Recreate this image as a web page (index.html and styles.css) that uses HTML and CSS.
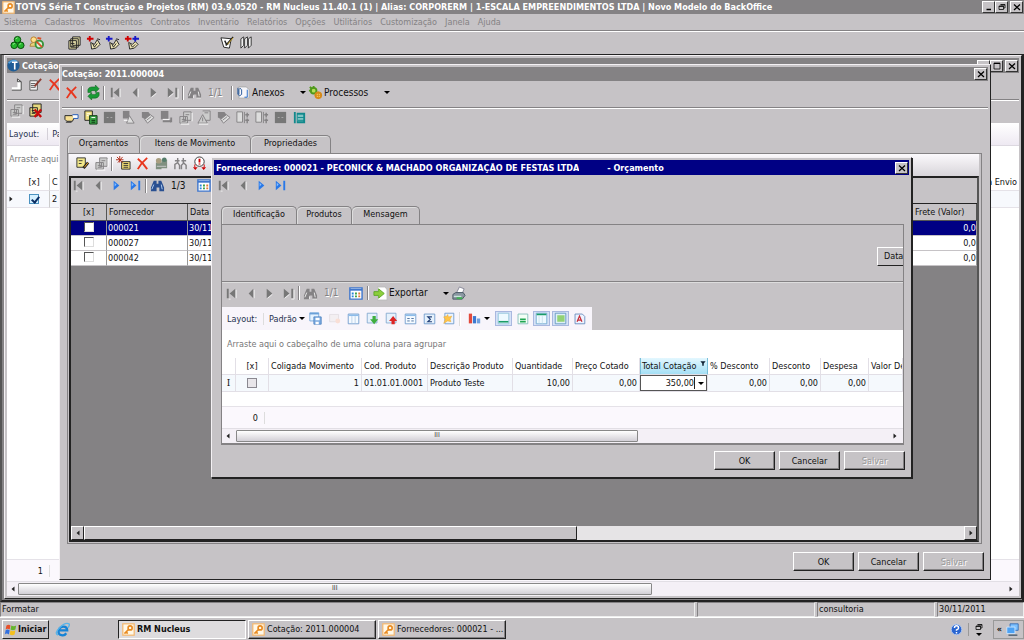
FILE: index.html
```html
<!DOCTYPE html>
<html lang="pt-BR">
<head>
<meta charset="utf-8">
<title>RM Nucleus</title>
<link rel="stylesheet" href="styles.css">
</head>
<body>
<svg class="defs" aria-hidden="true">
<symbol id="key" viewBox="0 0 16 16"><rect x="1" y="1" width="14" height="14" fill="#fff8e8" stroke="#f4b870" stroke-width="1.500"/><circle cx="10" cy="6" r="2.500" fill="none" stroke="#e88a20" stroke-width="2"/><path d="M8 8L3 13M5 11l2 2" stroke="#e88a20" stroke-width="2"/></symbol>
<symbol id="tri" viewBox="0 0 16 16"><g stroke="#044a08" fill="#25b52c"><circle cx="8" cy="5" r="3.500"/><circle cx="4.500" cy="11" r="3.500"/><circle cx="11.500" cy="11" r="3.500"/></g><path d="M6 4l2-1M3 10l2-1M10 10l2-1" stroke="#a9f5a4"/></symbol>
<symbol id="users" viewBox="0 0 16 16"><circle cx="5" cy="5" r="3" fill="#ffe08c" stroke="#b97d24"/><path d="M1 12q0-4 4-4t4 4z" fill="#e9d27b" stroke="#a98642"/><circle cx="11" cy="10" r="4" fill="#d8f0d8" stroke="#37943c" stroke-width="2"/><path d="M8 7l6 6M9 3l4 1" stroke="#d8512a" stroke-width="2"/></symbol>
<symbol id="stack" viewBox="0 0 16 16"><path d="M6 2h8v9h-8zM4 4h8v9H4zM2 6h8v9H2z" fill="#e6dfa8" stroke="#222"/><path d="M4 9h4M4 12h4" stroke="#222"/></symbol>
<symbol id="tagr" viewBox="0 0 16 16"><path d="M5 8l4 2 3-5 3 5-4 4-5 1z" fill="#f0e6b4" stroke="#222"/><path d="M7 9l2 4 3-4M12 4l3 1" stroke="#222" fill="none"/><path d="M1 4h7M4 1v6" stroke="#d00000" stroke-width="2"/></symbol>
<symbol id="tagb" viewBox="0 0 16 16"><path d="M5 8l4 2 3-5 3 5-4 4-5 1z" fill="#f0e6b4" stroke="#222"/><path d="M7 9l2 4 3-4M12 4l3 1" stroke="#222" fill="none"/><path d="M1 4h7M4 1v6" stroke="#1818c8" stroke-width="2"/></symbol>
<symbol id="tagrb" viewBox="0 0 16 16"><path d="M5 8l4 2 3-3 3 3-4 4-5 1z" fill="#f0e6b4" stroke="#222"/><path d="M7 10l2 3 3-3" stroke="#222" fill="none"/><path d="M1 4h7M4 1v6" stroke="#d00000" stroke-width="2"/><path d="M9 4h7M12 1v6" stroke="#1818c8" stroke-width="2"/></symbol>
<symbol id="note" viewBox="0 0 16 16"><path d="M1 3l11 1-2 10-6-1z" fill="#fff" stroke="#222"/><path d="M5 6l2 4 7-8M9 9l-3 2" stroke="#222" stroke-width="1.500" fill="none"/><path d="M8 10l6-7" stroke="#c9a020"/></symbol>
<symbol id="books" viewBox="0 0 16 16"><path d="M2 4l3-2v9l-3 3zM6 4l3-2v9l-3 3zM10 4l3-2v9l-3 3z" fill="#eee" stroke="#333"/></symbol>
<symbol id="totvs" viewBox="0 0 16 16"><circle cx="8" cy="8" r="7.500" fill="#1e5c96"/><path d="M2 5q5-5 10-2" stroke="#59a7df" stroke-width="2" fill="none"/><path d="M6 4h7M9.500 4v9" stroke="#fff" stroke-width="2"/></symbol>
<symbol id="page" viewBox="0 0 16 16"><path d="M3 14h10V5L9 2v9H3z" fill="#fff"/><path d="M3 14h10V5L9 2M9 2v3h4" stroke="#444" fill="none"/></symbol>
<symbol id="edit" viewBox="0 0 16 16"><path d="M2 4h8v10H2z" fill="#f4f4f4" stroke="#555"/><path d="M3 7h5M3 9h5M3 11h5" stroke="#555"/><path d="M7 10l7-8" stroke="#8c3c30" stroke-width="2"/></symbol>
<symbol id="x" viewBox="0 0 16 16"><path d="M3 3q5 4 10 11M13 2Q7 7 3 14" stroke="#e8361e" stroke-width="2" fill="none"/></symbol>
<symbol id="refresh" viewBox="0 0 16 16"><path d="M2 8V5q1-3 4-3h4V0l4 4-4 4V6H7q-2 0-2 2zM14 8v3q-1 3-4 3H6v2l-4-4 4-4v2h3q2 0 2-2z" fill="#179a35" stroke="#075a18" stroke-width=".5"/></symbol>
<symbol id="first" viewBox="0 0 16 16"><path d="M3 3h2v10H3zM12 3v10L6 8z" fill="#777"/><path d="M5 14h2M13 4v9" stroke="#eee"/></symbol>
<symbol id="prev" viewBox="0 0 16 16"><path d="M11 3v10L6 8z" fill="#777"/><path d="M12 4v9" stroke="#eee"/></symbol>
<symbol id="next" viewBox="0 0 16 16"><path d="M5 3v10l6-5z" fill="#777"/><path d="M6 13l5-4" stroke="#eee"/></symbol>
<symbol id="last" viewBox="0 0 16 16"><path d="M3 3v10l6-5zM11 3h2v10h-2z" fill="#777"/><path d="M14 4v10h-3M4 13l5-4" stroke="#eee" fill="none"/></symbol>
<symbol id="nextb" viewBox="0 0 16 16"><path d="M5 3v10l6-5z" fill="#2878e8"/><path d="M6 5v4l2-2z" fill="#8bc0ff"/></symbol>
<symbol id="lastb" viewBox="0 0 16 16"><path d="M3 3v10l6-5zM11 3h2v10h-2z" fill="#2878e8"/><path d="M4 5v4l2-2z" fill="#8bc0ff"/></symbol>
<symbol id="bino" viewBox="0 0 16 16"><path d="M4 3h3v3h2V3h3l3 7v4h-5v-4H7v4H1v-4z" fill="#848284"/><path d="M4 7l-2 5M12 7l1 5M7 11v3M15 14h-5" stroke="#eee"/></symbol>
<symbol id="binob" viewBox="0 0 16 16"><path d="M4 3h3v3h2V3h3l3 7v4h-5v-4H7v4H1v-4z" fill="#294f91"/><path d="M4 7l-2 5M12 7l1 5" stroke="#b6d2f4"/></symbol>
<symbol id="clip" viewBox="0 0 16 16"><path d="M3 2h8l3 3v9H3z" fill="#f6f6fa" stroke="#aaa"/><path d="M2 3v7q2 3 4 0V5Q4 2 3 5v5" stroke="#24569a" fill="none"/><path d="M12 5v8h-3" stroke="#1d65c6" fill="none"/></symbol>
<symbol id="proc" viewBox="0 0 16 16"><circle cx="6" cy="6" r="3" fill="#b3df58" stroke="#4f991b" stroke-width="2"/><path d="M1 6h3M6 1v3M2 2l2 2" stroke="#4f991b" stroke-width="2"/><circle cx="11" cy="11" r="3" fill="#ffd466" stroke="#d68a18" stroke-width="2"/><path d="M7 11h8M11 7v8" stroke="#d68a18"/></symbol>
<symbol id="hand" viewBox="0 0 16 16"><path d="M1 6h8l2 2-2 4H3l-2-2z" fill="#f7df92" stroke="#222"/><path d="M9 5h6v4h-5" fill="#fff" stroke="#1d57b5"/><path d="M2 13h6" stroke="#222"/></symbol>
<symbol id="calc" viewBox="0 0 16 16"><path d="M2 1h8v10H2z" fill="#f0e080" stroke="#222"/><path d="M7 6h8v9H7z" fill="#39a546" stroke="#163c1a"/><path d="M9 8h4M4 4h4M4 6h2" stroke="#fff"/><path d="M9 11h4M9 13h4" stroke="#0a280d"/></symbol>
<symbol id="gbox" viewBox="0 0 16 16"><path d="M2 2h12v12H2z" fill="#777"/><path d="M5 8h2M9 8h2" stroke="#aaa"/></symbol>
<symbol id="g1" viewBox="0 0 16 16"><path d="M2 1h7v8H2z" fill="#848284"/><path d="M9 6l5 8H6z" fill="#ddd" stroke="#848284"/><path d="M3 11h4" stroke="#fff"/></symbol>
<symbol id="g2" viewBox="0 0 16 16"><path d="M2 2h7l3 4-6 4-4-2z" fill="#848284"/><path d="M5 10l6-5 4 3-7 6z" fill="#ddd" stroke="#848284"/><path d="M7 11l5-4" stroke="#848284"/></symbol>
<symbol id="g3" viewBox="0 0 16 16"><path d="M2 1h8v9H2z" fill="#848284"/><path d="M4 12h9v-4M13 13l-2-2" stroke="#848284" stroke-width="2" fill="none"/><path d="M4 10h7" stroke="#fff"/></symbol>
<symbol id="g4" viewBox="0 0 16 16"><path d="M6 2h8v9H6zM2 7h8v7H2z" fill="#ccc" stroke="#848284"/><path d="M8 5h4M4 10h4M4 12h4M8 7v5" stroke="#848284"/><path d="M3 15h9M15 3v9" stroke="#fff"/></symbol>
<symbol id="g5" viewBox="0 0 16 16"><path d="M6 1h8v10H9M6 5l5 9H1z" fill="#ccc" stroke="#848284"/><path d="M6 8v4M8 3h4" stroke="#848284"/><path d="M2 15h10" stroke="#fff"/></symbol>
<symbol id="g6" viewBox="0 0 16 16"><path d="M2 2h6v11H2zM10 2v12" fill="#ddd" stroke="#848284"/><path d="M11 5h4M11 11h4M13 3v5M13 9v5" stroke="#848284" stroke-width="1.500"/></symbol>
<symbol id="teal" viewBox="0 0 16 16"><path d="M2 2h2v12H2zM5 3h9v11H5z" fill="#12898c"/><path d="M6 5h6v7H6z" fill="#7fc4c4"/><path d="M6 8h7M6 11h7" stroke="#12898c"/></symbol>
<symbol id="pedit" viewBox="0 0 16 16"><path d="M2 2h9v10H2z" fill="#f3e88a" stroke="#333"/><path d="M4 5h4M4 8h3" stroke="#333"/><path d="M9 13l5-6" stroke="#222" stroke-width="3"/><path d="M10 12l4-5" stroke="#ffad22"/></symbol>
<symbol id="addb" viewBox="0 0 16 16"><path d="M6 6h9v8H6z" fill="#f0dc74" stroke="#333"/><path d="M8 8h5M8 10h5M8 12h5" stroke="#333"/><path d="M1 1l6 6M7 1L2 7M4 0v7M0 4h8" stroke="#b12b18"/></symbol>
<symbol id="ppl" viewBox="0 0 16 16"><path d="M2 7h6v7H2zM8 4h6v9H8z" fill="#809080"/><circle cx="5" cy="5" r="3" fill="#a99e80"/><circle cx="11" cy="4" r="2.500" fill="#557d6b"/><path d="M3 11h10" stroke="#ccc"/></symbol>
<symbol id="run" viewBox="0 0 16 16"><path d="M5 2v5l-3 2v5M5 7l2 3v4M11 2v6l-2 2v4M11 7l3 3v4M2 5h5M9 5h5" stroke="#848284" stroke-width="1.500" fill="none"/></symbol>
<symbol id="warn" viewBox="0 0 16 16"><circle cx="8" cy="6" r="5" fill="#fff" stroke="#333"/><path d="M8 3v4M8 8v1" stroke="#d00000" stroke-width="2"/><path d="M1 12h5l-2.500 3zM10 12h5l-2.500 3z" fill="#d00000"/><path d="M3 9v3M13 9v3" stroke="#d00000"/></symbol>
<symbol id="delx" viewBox="0 0 16 16"><path d="M5 1h9v9H5zM2 5h8v9H2z" fill="#e6d97c" stroke="#222"/><path d="M4 8h4M4 11h4" stroke="#222"/><path d="M7 7l7 8M14 7l-7 8" stroke="#c80c0c" stroke-width="2.500"/></symbol>
<symbol id="cal" viewBox="0 0 16 16"><path d="M2 2h13v12H2z" fill="#fff" stroke="#3f76cc" stroke-width="1.500"/><path d="M2 4h13" stroke="#3f76cc" stroke-width="2"/><path d="M4 8h2M4 11h2" stroke="#2586d8" stroke-width="2"/><path d="M7.500 8h2M7.500 11h2" stroke="#37a045" stroke-width="2"/><path d="M11 8h2M11 11h2" stroke="#e47a35" stroke-width="2"/></symbol>
<symbol id="exp" viewBox="0 0 16 16"><path d="M5 1h8l2 3v11H5z" fill="#fff" stroke="#bbb"/><path d="M1 6h5V3l6 5-6 5v-3H1z" fill="#8ccf3c" stroke="#5fa82a"/></symbol>
<symbol id="print" viewBox="0 0 16 16"><path d="M6 7l3-6 5 2-2 5z" fill="#fff" stroke="#889"/><path d="M2 9l3-2h8l2 3-3 4H2z" fill="#8b97a2" stroke="#4a5a64"/><path d="M3 11h8" stroke="#dfe" /><path d="M6 13h6" stroke="#3fb050" stroke-width="2"/></symbol>
<symbol id="save" viewBox="0 0 16 16"><path d="M1 1h11v10H1z" fill="#e6f3ff" stroke="#6aa0d8"/><path d="M1 2h11" stroke="#6aa0d8" stroke-width="2"/><path d="M6 6h9v9H6z" fill="#7dabe0" stroke="#4a80c0"/><path d="M8 7h5v3H8zM8 12h4v3H8z" fill="#fff"/></symbol>
<symbol id="fade" viewBox="0 0 16 16"><path d="M2 3h11v9H2z" fill="#f3eff2" stroke="#e2dde2"/><circle cx="12" cy="11" r="3" fill="#f9dfd6"/></symbol>
<symbol id="tbl" viewBox="0 0 16 16"><path d="M1.500 2.500h13v12h-13z" fill="#f5faff" stroke="#6592c8"/><path d="M2 4h12" stroke="#8cbbe9" stroke-width="2"/><path d="M6 5v9M10 5v9" stroke="#b5cde6"/></symbol>
<symbol id="dn" viewBox="0 0 16 16"><path d="M1.500 1.500h12v12h-12z" fill="#e6f1fc" stroke="#7da2cc"/><path d="M8 5h4v4h3l-5 6-5-6h3z" fill="#3fae3f"/></symbol>
<symbol id="up" viewBox="0 0 16 16"><path d="M1.500 1.500h12v12h-12z" fill="#e6f1fc" stroke="#7da2cc"/><path d="M8 15h4v-4h3l-5-6-5 6h3z" fill="#dc2525"/></symbol>
<symbol id="lst" viewBox="0 0 16 16"><path d="M1.500 2.500h13v12h-13z" fill="#f5faff" stroke="#6592c8"/><path d="M2 4h12" stroke="#8cbbe9" stroke-width="2"/><path d="M4 8h3M9 8h3M4 11h3M9 11h3" stroke="#345b91"/></symbol>
<symbol id="sum" viewBox="0 0 16 16"><path d="M1.500 2.500h13v12h-13z" fill="#e6f1fc" stroke="#6592c8"/><path d="M11 6H6l3 3-3 3h5" stroke="#213e76" stroke-width="1.500" fill="none"/></symbol>
<symbol id="star" viewBox="0 0 16 16"><path d="M3.500 1.500h11v13h-11z" fill="#eaf3ff" stroke="#6592c8"/><path d="M7 3l1 3 4-1-2 4 1 3-4-1-5 3 2-5-2-3 4-1z" fill="#ffc44a" stroke="#e6a32b" stroke-width=".5"/></symbol>
<symbol id="chart" viewBox="0 0 16 16"><path d="M1 2h4v12H1z" fill="#e2493c"/><path d="M6 5h4v9H6z" fill="#3b78d0"/><path d="M11 8h4v6h-4z" fill="#6f9fdf"/></symbol>
<symbol id="foot" viewBox="0 0 16 16"><path d="M1.500 1.500h13v13h-13z" fill="#eefaff" stroke="#8ac0d8"/><path d="M2 12h12" stroke="#1a9c68" stroke-width="2"/></symbol>
<symbol id="grn" viewBox="0 0 16 16"><path d="M2.500 2.500h12v12h-12z" fill="#f3fff6" stroke="#7bb8b4"/><path d="M5 9h7M5 12h7" stroke="#1fa552" stroke-width="2"/></symbol>
<symbol id="head" viewBox="0 0 16 16"><path d="M1.500 1.500h13v13h-13z" fill="#eefaff" stroke="#6aa4cc"/><path d="M2 3h12" stroke="#1a9c68" stroke-width="2"/><path d="M5 5v9M9 5v9" stroke="#c5dcea"/></symbol>
<symbol id="fill" viewBox="0 0 16 16"><path d="M1.500 1.500h13v13h-13z" fill="#dfeff8" stroke="#5b92bc"/><path d="M4 4h9v8H4z" fill="#93d275"/></symbol>
<symbol id="fnt" viewBox="0 0 16 16"><path d="M2.500 2.500h9l3 3v9h-12z" fill="#eef3ff" stroke="#5d82b8"/><path d="M5 12l3-7 3 7M6 10h4" stroke="#c72d38" stroke-width="1.500" fill="none"/></symbol>
<symbol id="win" viewBox="0 0 16 16"><path d="M3 3q3-2 5 0L7 8Q4 6 2 8z" fill="#e8502a"/><path d="M9 3q3 2 6 0l-1 5q-3 2-6 0z" fill="#66b52e"/><path d="M2 9q2-2 5 0l-1 5q-3-2-5 0z" fill="#2f6fe0"/><path d="M8 9q3 2 6 0l-1 5q-3 2-6 0z" fill="#f4c01e"/></symbol>
<symbol id="ie" viewBox="0 0 16 16"><path d="M12 12q-2 3-5 2-4-1-3-5t5-4q4 0 4 4H5" fill="none" stroke="#1683d6" stroke-width="2.500"/><path d="M3 14Q-1 12 5 6T15 2q1 1-1 4" stroke="#58b4ea" fill="none" stroke-width="1.500"/></symbol>
<symbol id="help" viewBox="0 0 16 16"><circle cx="8" cy="8" r="6.500" fill="#2864d0" stroke="#b9d0f5"/><path d="M5.500 6q0-2.500 2.500-2.500T10.500 6Q10.500 7.500 8 8.500v1M8 11v2" stroke="#fff" stroke-width="1.800" fill="none"/></symbol>
<symbol id="restore" viewBox="0 0 16 16"><path d="M5 3h9v7h-3M2 6h9v7H2zM5 4h9M2 7h9" stroke="#000" stroke-width="1.500" fill="none"/></symbol>
<symbol id="max" viewBox="0 0 16 16"><path d="M2 2h12v12H2z" stroke="#000" stroke-width="1.500" fill="none"/><path d="M2 3h12" stroke="#000" stroke-width="2"/></symbol>
<symbol id="min" viewBox="0 0 16 16"><path d="M3 13h9" stroke="#000" stroke-width="3"/></symbol>
<symbol id="close" viewBox="0 0 16 16"><path d="M2 3l12 11M14 3L2 14" stroke="#000" stroke-width="2.500"/></symbol>
<symbol id="net" viewBox="0 0 16 16"><path d="M5 1h10v8H5z" fill="#7dc1ff" stroke="#2a64b0"/><path d="M1 5h10v8H1z" fill="#4da2f4" stroke="#d6ebff"/><path d="M3 15h11" stroke="#5c6c7c" stroke-width="2"/></symbol>
<symbol id="funnel" viewBox="0 0 16 16"><path d="M1 2h14l-5 6v6H6V8z" fill="#123"/></symbol>
<symbol id="al" viewBox="0 0 16 16"><path d="M11 3v10L5 8z" fill="#222"/></symbol>
<symbol id="ar" viewBox="0 0 16 16"><path d="M5 3v10l6-5z" fill="#222"/></symbol>
</svg>

<header class="title main-title"><svg class="ic sm"><use href="#key"/></svg><h1>TOTVS Série T Construção e Projetos (RM) 03.9.0520 - RM Nucleus 11.40.1 (1) | Alias: CORPORERM | 1-ESCALA EMPREENDIMENTOS LTDA | Novo Modelo do BackOffice</h1>
<button class="cap" aria-label="Minimizar"><svg><use href="#min"/></svg></button><button class="cap" aria-label="Restaurar"><svg><use href="#restore"/></svg></button><button class="cap gap" aria-label="Fechar"><svg><use href="#close"/></svg></button></header>
<nav class="menu"><button>Sistema</button><button>Cadastros</button><button>Movimentos</button><button>Contratos</button><button>Inventário</button><button>Relatórios</button><button>Opções</button><button>Utilitários</button><button>Customização</button><button>Janela</button><button>Ajuda</button></nav>
<div class="bar main-bar"><svg class="ic"><use href="#tri"/></svg><svg class="ic"><use href="#users"/></svg><span class="sp"></span><svg class="ic"><use href="#stack"/></svg><svg class="ic"><use href="#tagr"/></svg><svg class="ic"><use href="#tagb"/></svg><svg class="ic"><use href="#tagrb"/></svg><span class="sp wide"></span><svg class="ic"><use href="#note"/></svg><svg class="ic"><use href="#books"/></svg></div>

<main class="mdi">
<section class="window w1">
  <div class="title"><svg class="ic sm"><use href="#totvs"/></svg><h2>Cotação</h2><button class="cap" aria-label="Minimizar"><svg><use href="#min"/></svg></button><button class="cap" aria-label="Maximizar"><svg><use href="#max"/></svg></button><button class="cap gap" aria-label="Fechar"><svg><use href="#close"/></svg></button></div>
  <div class="bar b1"><svg class="ic"><use href="#page"/></svg><svg class="ic"><use href="#edit"/></svg><svg class="ic"><use href="#x"/></svg></div>
  <div class="bar b2"><svg class="ic"><use href="#g4"/></svg><svg class="ic"><use href="#delx"/></svg></div>
  <div class="lay"><span>Layout:</span><span class="pa">Pa</span></div>
  <div class="group">Arraste aqui</div>
  <table class="list"><colgroup><col class="c12"><col class="c30"><col class="c35"><col></colgroup>
    <thead><tr><th></th><th class="ctr">[x]</th><th>C</th><th class="num">a Envio</th></tr></thead>
    <tbody><tr><td><svg class="tiny"><use href="#ar"/></svg></td><td class="ctr"><input type="checkbox" class="blue" checked aria-label="Selecionar cotação"></td><td>2</td><td></td></tr></tbody></table>
  <div class="grow"></div>
  <div class="count"><span>1</span></div>
  <div class="hs"><svg class="tiny"><use href="#al"/></svg><span class="rail"><span class="thumb t1">III</span></span><svg class="tiny"><use href="#ar"/></svg></div>
</section>

<section class="window w2">
  <div class="title"><h2>Cotação: 2011.000004</h2><button class="cap" aria-label="Fechar"><svg><use href="#close"/></svg></button></div>
  <div class="bar line t92"><svg class="ic"><use href="#x"/></svg><i class="sep"></i><svg class="ic"><use href="#refresh"/></svg><i class="sep"></i><svg class="ic"><use href="#first"/></svg><svg class="ic"><use href="#prev"/></svg><svg class="ic"><use href="#next"/></svg><svg class="ic"><use href="#last"/></svg><i class="sep"></i><svg class="ic"><use href="#bino"/></svg><span class="pos off">1/1</span><i class="sep"></i><button class="tool t-anx"><svg class="ic"><use href="#clip"/></svg>Anexos<b class="dd"></b></button><button class="tool t-prc"><svg class="ic"><use href="#proc"/></svg>Processos<b class="dd"></b></button></div>
  <div class="bar t117"><svg class="ic"><use href="#hand"/></svg><svg class="ic"><use href="#calc"/></svg><svg class="ic"><use href="#gbox"/></svg><svg class="ic"><use href="#g1"/></svg><svg class="ic"><use href="#g2"/></svg><svg class="ic"><use href="#g3"/></svg><svg class="ic"><use href="#g4"/></svg><svg class="ic"><use href="#g5"/></svg><svg class="ic"><use href="#g2"/></svg><svg class="ic"><use href="#g6"/></svg><svg class="ic"><use href="#g6"/></svg><svg class="ic"><use href="#gbox"/></svg><svg class="ic"><use href="#teal"/></svg></div>
  <div class="tabs" role="tablist"><button role="tab" class="tab on ta">Orçamentos</button><button role="tab" class="tab tb">Itens de Movimento</button><button role="tab" class="tab tc">Propriedades</button></div>
  <div class="panel p2">
    <div class="bar wbar"><svg class="ic"><use href="#pedit"/></svg><svg class="ic"><use href="#g4"/></svg><i class="sep"></i><svg class="ic"><use href="#addb"/></svg><svg class="ic"><use href="#x"/></svg><svg class="ic"><use href="#ppl"/></svg><svg class="ic"><use href="#run"/></svg><svg class="ic"><use href="#warn"/></svg></div>
    <div class="sunk">
      <div class="bar nav2"><svg class="ic"><use href="#first"/></svg><svg class="ic"><use href="#prev"/></svg><svg class="ic"><use href="#nextb"/></svg><svg class="ic"><use href="#lastb"/></svg><i class="sep"></i><svg class="ic"><use href="#binob"/></svg><span class="pos">1/3</span><svg class="ic"><use href="#cal"/></svg></div>
      <table class="forn"><colgroup><col class="c36"><col class="c81"><col><col class="c64"></colgroup>
        <thead><tr><th class="ctr">[x]</th><th>Fornecedor</th><th>Data</th><th>Frete (Valor)</th></tr></thead>
        <tbody><tr class="sel"><td class="ctr"><input type="checkbox" class="classic" aria-label="000021"></td><td>000021</td><td>30/11</td><td class="num">0,0</td></tr>
        <tr><td class="ctr"><input type="checkbox" class="classic" aria-label="000027"></td><td>000027</td><td>30/11</td><td class="num">0,0</td></tr>
        <tr><td class="ctr"><input type="checkbox" class="classic" aria-label="000042"></td><td>000042</td><td>30/11</td><td class="num">0,0</td></tr></tbody></table>
      <div class="grow"></div>
      <div class="hs2"><button class="sb" aria-label="Esquerda"><svg class="tiny"><use href="#al"/></svg></button><span class="rail"><span class="thumb2"></span></span><button class="sb" aria-label="Direita"><svg class="tiny"><use href="#ar"/></svg></button></div>
    </div>
  </div>
  <div class="actions"><button class="btn">OK</button><button class="btn">Cancelar</button><button class="btn" disabled>Salvar</button></div>
</section>

<section class="window w3">
  <div class="title active"><h2>Fornecedores: 000021 - PECONICK &amp; MACHADO ORGANIZAÇÃO DE FESTAS LTDA</h2><h2 class="suffix">- Orçamento</h2><button class="cap" aria-label="Fechar"><svg><use href="#close"/></svg></button></div>
  <div class="bar nav3"><svg class="ic"><use href="#first"/></svg><svg class="ic"><use href="#prev"/></svg><svg class="ic"><use href="#nextb"/></svg><svg class="ic"><use href="#lastb"/></svg></div>
  <div class="tabs" role="tablist"><button role="tab" class="tab td">Identificação</button><button role="tab" class="tab on te">Produtos</button><button role="tab" class="tab tf">Mensagem</button></div>
  <div class="panel p3">
    <div class="upper"><button class="btn data">Data</button></div>
    <div class="bar t292"><svg class="ic"><use href="#first"/></svg><svg class="ic"><use href="#prev"/></svg><svg class="ic"><use href="#next"/></svg><svg class="ic"><use href="#last"/></svg><i class="sep"></i><svg class="ic"><use href="#bino"/></svg><span class="pos off">1/1</span><svg class="ic cal"><use href="#cal"/></svg><i class="sep"></i><button class="tool t-exp"><svg class="ic"><use href="#exp"/></svg>Exportar<b class="dd"></b></button><svg class="ic"><use href="#print"/></svg></div>
    <div class="lay l3"><span class="lb">Layout:</span><button class="pd">Padrão<b class="dd"></b></button><svg class="ic"><use href="#save"/></svg><svg class="ic"><use href="#fade"/></svg><svg class="ic"><use href="#tbl"/></svg><svg class="ic"><use href="#dn"/></svg><svg class="ic"><use href="#up"/></svg><svg class="ic"><use href="#lst"/></svg><svg class="ic"><use href="#sum"/></svg><svg class="ic"><use href="#star"/></svg><i class="sep pale"></i><svg class="ic"><use href="#chart"/></svg><b class="dd tight"></b><svg class="ic tog"><use href="#foot"/></svg><svg class="ic"><use href="#grn"/></svg><svg class="ic tog"><use href="#head"/></svg><svg class="ic tog"><use href="#fill"/></svg><svg class="ic"><use href="#fnt"/></svg></div>
    <div class="gridbox">
      <div class="group">Arraste aqui o cabeçalho de uma coluna para agrupar</div>
      <table class="prod"><colgroup><col class="c14"><col class="c33"><col class="c93"><col class="c66"><col class="c85"><col class="c60"><col class="c67"><col class="c68"><col class="c62"><col class="c51"><col class="c48"><col></colgroup>
        <thead><tr><th></th><th class="ctr">[x]</th><th>Coligada Movimento</th><th>Cod. Produto</th><th>Descrição Produto</th><th>Quantidade</th><th>Preço Cotado</th><th class="hot"><span>Total Cotação<svg class="fun"><use href="#funnel"/></svg></span></th><th>% Desconto</th><th>Desconto</th><th>Despesa</th><th>Valor De</th></tr></thead>
        <tbody><tr><td class="ctr beam">I</td><td class="ctr"><input type="checkbox" class="plain" aria-label="Selecionar produto"></td><td class="num">1</td><td>01.01.01.0001</td><td>Produto Teste</td><td class="num">10,00</td><td class="num">0,00</td><td class="ed"><span class="combo"><input type="text" value="350,00" aria-label="Total Cotação"><b class="dd"></b></span></td><td class="num">0,00</td><td class="num">0,00</td><td class="num">0,00</td><td></td></tr></tbody></table>
      <div class="grow"></div>
      <div class="count"><span>0</span></div>
      <div class="hs"><svg class="tiny"><use href="#al"/></svg><span class="rail"><span class="thumb t3">III</span></span><svg class="tiny"><use href="#ar"/></svg></div>
    </div>
  </div>
  <div class="actions"><button class="btn">OK</button><button class="btn">Cancelar</button><button class="btn" disabled>Salvar</button></div>
</section>
</main>

<footer class="status"><span class="grow">Formatar</span><span class="s1"></span><span class="s1">consultoria</span><span class="s2">30/11/2011</span></footer>
<div class="taskbar"><button class="start"><svg class="ic sm"><use href="#win"/></svg>Iniciar</button><svg class="ic ie"><use href="#ie"/></svg><button class="task on"><svg class="ic sm"><use href="#key"/></svg>RM Nucleus</button><button class="task"><svg class="ic sm"><use href="#key"/></svg>Cotação: 2011.000004</button><button class="task"><svg class="ic sm"><use href="#key"/></svg>Fornecedores: 000021 - ...</button><span class="grow"></span><svg class="ic sm"><use href="#help"/></svg><span class="mini"><svg class="tiny"><use href="#restore"/></svg><b class="dd"></b></span><span class="tray">«<svg class="ic sm"><use href="#net"/></svg></span></div>
</body>
</html>
```
FILE: styles.css
```css
* { box-sizing: border-box; }
html, body { height: 100%; }
body { margin: 0; display: flex; flex-direction: column; overflow: hidden; background: #c6c3c6; color: #111; font: 9px/12px "DejaVu Sans Condensed", "DejaVu Sans", Tahoma, sans-serif; white-space: nowrap; }
button, input { font: inherit; color: inherit; margin: 0; padding: 0; border: 0; background: none; border-radius: 0; }
h1, h2 { margin: 0; font-size: inherit; line-height: inherit; overflow: hidden; }
.defs { position: absolute; width: 0; height: 0; }
.ic { width: 15px; height: 15px; flex: none; margin: 0 2px; }
.ic.sm { width: 13px; height: 13px; margin: 0 1px; }
.tiny { width: 8px; height: 8px; flex: none; display: block; }
.grow { flex: 1; min-width: 0; }
.dd { border: 3px solid transparent; border-top-color: #000; border-bottom: 0; width: 6px; flex: none; }

.title { display: flex; align-items: center; flex: none; height: 14px; background: #848284; color: #fff; font-weight: bold; padding-right: 1px; }
.title h1, .title h2 { flex: 1; }
.cap { width: 13px; height: 12px; flex: none; background: #c6c3c6; border: 1px solid; border-color: #fff #333 #333 #fff; display: flex; align-items: center; justify-content: center; }
.cap svg { width: 8px; height: 8px; }
.cap.gap { margin-left: 2px; }
.main-title { padding-left: 1px; }
.menu { display: flex; gap: 8px; height: 17px; align-items: center; padding-left: 4px; color: #848284; border-bottom: 1px solid #848284; flex: none; }
.bar { display: flex; align-items: center; flex: none; }
.main-bar { height: 23px; padding: 0 0 1px 8px; border-top: 1px solid #fff; }
.sp { width: 19px; }
.sp.wide { width: 77px; }
.sep { width: 2px; height: 14px; margin-right: 1px; background: #848284; border-right: 1px solid #fff; flex: none; }
.pos { width: 27px; padding-left: 4px; font-size: 10px; flex: none; }
.off { color: #848284; text-shadow: 1px 1px #fff; }
.tool { display: flex; align-items: center; font-size: 10px; }
.tool .ic { margin-right: 1px; }
.tool .dd { margin-left: auto; }
.t-anx { width: 72px; }
.t-prc { width: 84px; }
.t-exp { width: 78px; }

.mdi { position: relative; flex: 1; min-height: 0; border: 2px solid #222; border-top-width: 1px; border-color: #222 #222 #222 #555; background: #848284; }
.window { position: absolute; display: flex; flex-direction: column; background: #c6c3c6; border: 1px solid; border-color: #f4f1f4 #222 #222 #f4f1f4; }
.w1 { inset: 0 0 1px 2px; padding: 2px; }
.w1 .title { height: 15px; }
.w1 .b1 { height: 27px; border-bottom: 1px solid #848284; padding-bottom: 3px; }
.w1 .b2 { height: 22px; border-top: 1px solid #fff; padding-bottom: 3px; }
.w1 .title .ic { margin: 0 2px 0 0; }
.lay { background: #f8f5fb; color: #27334e; display: flex; align-items: center; flex: none; height: 23px; }
.w1 .lay { padding-left: 2px; margin-top: 1px; background: linear-gradient(#fff, #eee9f2); border-bottom: 1px solid #dcd8e0; }
.pa { margin-left: 8px; padding-left: 4px; border-left: 1px solid #d4d0d8; }
.group { color: #777; padding: 8px 5px 0; height: 28px; flex: none; background: #fff; }
.w1 .group { padding: 7px 2px 0; }
table { table-layout: fixed; width: 100%; border-collapse: separate; border-spacing: 0; flex: none; }
th, td { font-weight: normal; text-align: left; padding: 0 2px; height: 17px; overflow: hidden; }
.ctr { text-align: center; }
.num { text-align: right; }
.list { background: #fff; }
.list th, .list td { border-bottom: 1px solid #e5e2e8; }
.list td { background: #f7f9fd; }
.list td:first-child { padding: 0; }
.list th:nth-child(3), .list td:nth-child(3) { border-left: 1px solid #ccc; }
.w1 > .grow, .gridbox > .grow { background: #fff; }
.count { background: #fbf8fd; border-top: 1px solid #e5e2e8; flex: none; display: flex; align-items: center; height: 22px; }
.count span { width: 43px; text-align: right; padding-right: 6px; border-right: 1px solid #ddd; }
.hs { display: flex; align-items: center; height: 15px; flex: none; padding: 0 4px 0 2px; background: #f4f0f6; border-top: 1px solid #e2dfe5; }
.rail { flex: 1; display: flex; align-self: stretch; }
.thumb { margin: 1px 0; display: block; border: 1px solid #888; border-radius: 1px; background: linear-gradient(#fff, #d2cfd6); text-align: center; font-size: 7px; line-height: 9px; color: #333; }
.t1 { width: 64%; margin-left: 1px; }
.t3 { width: 61%; margin-left: 4px; }
input[type=checkbox] { appearance: none; display: inline-block; width: 10px; height: 10px; vertical-align: top; margin-top: 1px; }
.blue { border: 1px solid #4b92c0; background: #d5f0ff; position: relative; }
.blue:checked::after { content: ""; position: absolute; left: 3px; top: 0; width: 3px; height: 6px; border: solid #0b2d63; border-width: 0 2px 2px 0; transform: rotate(40deg); }
.classic { background: #fff; border: 1px solid; border-color: #555 #ddd #ddd #555; }
.plain { background: #e8e6ea; border: 1px solid #8a8890; }

.w2 { inset: 9px 31px 20px 57px; padding: 2px; }
.t92 { height: 27px; padding: 0 0 3px; }
.line { border-bottom: 1px solid #848284; }
.t117 { height: 21px; border-top: 1px solid #fff; padding-bottom: 3px; }
.tabs { display: flex; flex: none; align-items: flex-end; }
.w2 .tabs { padding: 6px 6px 0 5px; }
.tab { height: 18px; border: 1px solid #848284; border-bottom: 0; border-radius: 5px 5px 0 0; box-shadow: inset 1px 1px #ddd; text-align: center; padding-bottom: 3px; }
.tab + .tab { border-left-width: 0; }
.ta { width: 73px; } .tb { width: 111px; } .tc { width: 80px; }
.td { width: 76px; } .te { width: 55px; } .tf { width: 68px; }
.panel { flex: 1; display: flex; flex-direction: column; min-height: 0; border: 1px solid #848284; }
.p2 { margin: 0 6px 0 5px; padding: 0 2px 1px 1px; }
.wbar { height: 22px; background: linear-gradient(#fbf9fc, #d8d5da); padding: 0 0 3px 4px; }
.sunk { flex: 1; display: flex; flex-direction: column; border: 2px solid #222; border-right-color: #555; background: #848284; min-height: 0; }
.nav2 { height: 26px; background: #c6c3c6; padding-bottom: 10px; border-bottom: 1px solid #222; }
.nav2 .ic:first-child { margin-left: 0; }
.forn th { background: #c6c3c6; border-right: 1px solid #555; border-bottom: 1px solid #555; }
.forn td { background: #fff; height: 15px; padding: 0 1px; border-right: 1px solid #999; border-bottom: 1px solid #c6c3c6; line-height: 14px; }
.forn tr.sel td { background: #000084; color: #fff; }
.forn td.num { padding: 0; }
.hs2 { display: flex; height: 14px; flex: none; background: #e6e4e6; }
.sb { width: 13px; background: #c6c3c6; border: 1px solid; border-color: #fff #222 #222 #fff; display: flex; align-items: center; justify-content: center; }
.thumb2 { width: 56%; background: #c6c3c6; border: 1px solid; border-color: #fff #222 #222 #fff; }
.actions { display: flex; justify-content: flex-end; gap: 4px; flex: none; padding: 8px 4px 6px; }
.btn { width: 61px; height: 19px; border: 1px solid; border-color: #fff #222 #222 #fff; box-shadow: inset -1px -1px #848284; text-align: center; }
.btn:disabled { color: #999; text-shadow: 1px 1px #fff; }

.w3 { inset: 102px 110px 122px 209px; padding: 2px; box-shadow: 1px 1px #222; }
.active { background: #000084; height: 15px; padding-left: 2px; }
.w3 .title h2 { flex: none; }
.w3 .title .suffix { margin-left: 28px; flex: 1; }
.nav3 { height: 23px; padding-bottom: 3px; }
.w3 .tabs { padding: 8px 7px 0 7px; }
.p3 { margin: 0 5px 0 7px; border-bottom: 2px solid #848284; }
.upper { height: 57px; display: flex; align-items: center; justify-content: flex-end; padding-top: 6px; border-bottom: 1px solid #848284; overflow: hidden; flex: none; }
.data { width: 26px; flex: none; border-right: 0; box-shadow: none; overflow: hidden; text-align: left; padding-left: 6px; }
.t292 { height: 25px; padding-bottom: 4px; border-top: 1px solid #ddd; }
.t292 .cal { margin-left: 1px; }
.t292 .cal + .sep { margin: 0 2px; }
.l3 { align-self: flex-start; width: 370px; max-width: 100%; padding-left: 5px; }
.lb { width: 36px; }
.pd { display: flex; align-items: center; gap: 2px; border-left: 1px solid #ddd; padding-left: 5px; width: 43px; }
.l3 .ic { height: 13px; width: 15px; }
.l3 .tog { outline: 1px solid #a9b8df; background: #d6e2f7; }
.l3 .pale { background: #ddd; margin: 0 4px 0 1px; }
.tight { margin-right: 4px; }
.gridbox { flex: 1; min-height: 0; display: flex; flex-direction: column; background: #fff; }
.prod th, .prod td { border-right: 1px solid #e2dfe6; border-bottom: 1px solid #e2dfe6; }
.prod tbody td { background: #f5f9fd; }
.prod th:last-child { padding-right: 0; }
.prod .hot { background: linear-gradient(#e3f7ff, #a5dff5); border-left: 1px solid #7abed8; border-right-color: #7abed8; padding: 0 1px; }
.hot span { display: flex; justify-content: space-between; }
.fun { width: 6px; height: 7px; flex: none; }
.beam { font-family: "DejaVu Serif", serif; }
.prod .ed { padding: 0; background: #fff; }
.combo { display: flex; align-items: center; height: 16px; border: 1px solid #555; }
.combo input { width: 54px; height: 12px; text-align: right; border-right: 1px solid #222; }
.combo .dd { margin-left: 3px; }
.w3 .actions { padding: 6px 4px 5px; }
.c12 { width: 12px; } .c14 { width: 14px; } .c30 { width: 30px; } .c33 { width: 33px; } .c35 { width: 35px; } .c36 { width: 36px; }
.c48 { width: 48px; } .c51 { width: 51px; } .c60 { width: 60px; } .c62 { width: 62px; } .c64 { width: 64px; } .c66 { width: 66px; }
.c67 { width: 67px; } .c68 { width: 68px; } .c81 { width: 81px; } .c85 { width: 85px; } .c93 { width: 93px; }

.status { display: flex; gap: 2px; height: 15px; flex: none; }
.status span { border: 1px solid; border-color: #848284 #eee #eee #848284; padding-left: 1px; }
.s1 { width: 118px; } .s2 { width: 87px; }
.taskbar { display: flex; align-items: center; height: 23px; flex: none; border-top: 1px solid #fff; padding-left: 2px; }
.start { display: flex; align-items: center; font-weight: bold; width: 47px; height: 19px; border: 1px solid; border-color: #fff #222 #222 #fff; }
.ie { margin: 0 48px 0 6px; }
.task { display: flex; align-items: center; gap: 1px; width: 128px; height: 19px; margin-right: 2px; padding-left: 2px; border: 1px solid; border-color: #fff #222 #222 #fff; box-shadow: inset -1px -1px #848284; }
.task.on { font-weight: bold; background: #dedcde; border-color: #222 #fff #fff #222; box-shadow: none; }
.mini { display: flex; flex-direction: column; align-items: center; gap: 2px; padding: 0 6px; margin-left: 4px; border-left: 1px solid #999; }
.tray { display: flex; align-items: center; gap: 3px; padding: 2px 3px; margin-left: 4px; border: 1px solid #999; font-weight: bold; }
```
